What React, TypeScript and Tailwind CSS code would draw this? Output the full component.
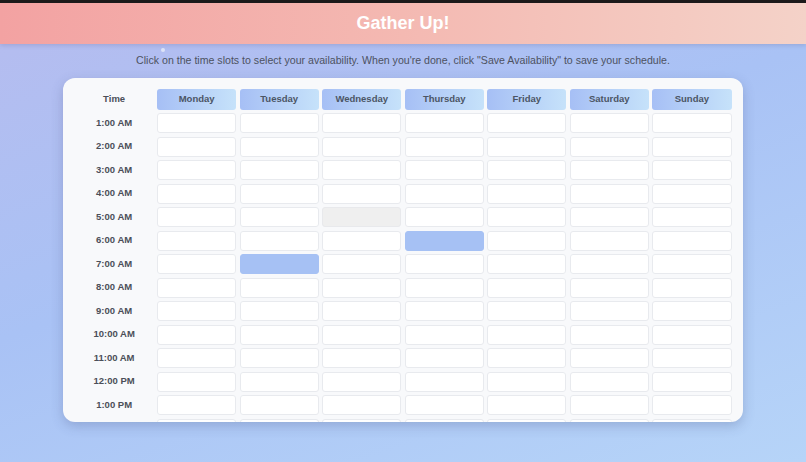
const days = ['Monday', 'Tuesday', 'Wednesday', 'Thursday', 'Friday', 'Saturday', 'Sunday'];

// 1:00 AM through 2:00 PM, the card only shows the first rows anyway
const hours = Array.from({ length: 14 }, (_, i) => {
  const h = i + 1;
  const label = h % 12 === 0 ? 12 : h % 12;
  const suffix = h < 12 ? 'AM' : 'PM';
  return `${label}:00 ${suffix}`;
});

// slot key = `${hourIndex}-${dayIndex}`
const selected = new Set(['5-3', '6-1']);
const hovered = '4-2';

export default function App() {
  return (
    <div
      className="relative flex h-[462px] w-[806px] flex-col overflow-hidden bg-[linear-gradient(160deg,#b6bcef_0%,#a9c2f5_45%,#b6d4f8_100%)]"
      style={{ fontFamily: '"Liberation Sans", Arial, sans-serif' }}
    >
      {/* Top strip */}
      <div className="h-[3px] shrink-0 bg-[#1c1a1a]" />

      {/* Header */}
      <header className="flex h-[41px] shrink-0 items-center justify-center bg-[linear-gradient(90deg,#f3a2a2_0%,#f4b9b2_50%,#f4d2c8_100%)] shadow-[0_2px_4px_rgba(80,80,120,0.18)]">
        <h1 className="text-[18px] font-bold text-white">Gather Up!</h1>
      </header>

      <span className="absolute left-[161px] top-[48px] h-[4px] w-[4px] rounded-full bg-[#dde3f7]" />

      <p className="mt-[10px] text-center text-[10.6px] leading-[13px] text-[#4d5261]">
        Click on the time slots to select your availability. When you're done, click "Save Availability" to save your
        schedule.
      </p>

      {/* Calendar card */}
      <div className="ml-[63px] mt-[11px] h-[344px] w-[680px] overflow-hidden rounded-[12px] bg-[#f8f9fb] px-[11.5px] pt-[11px] shadow-[0_4px_12px_rgba(60,70,120,0.25)]">
        <div className="grid grid-cols-8 gap-x-[3.3px] gap-y-[3.5px]">
          <div className="flex h-[20.5px] items-center justify-center text-[9.5px] font-bold text-[#4b4f58]">Time</div>
          {days.map((d) => (
            <div
              key={d}
              className="flex h-[20.5px] items-center justify-center rounded-[3px] bg-[linear-gradient(90deg,#a6bff5,#c6e2fa)] text-[9.5px] font-bold text-[#4b5565]"
            >
              {d}
            </div>
          ))}

          {hours.map((h, hi) => (
            <div key={h} className="contents">
              <div className="flex h-[20px] items-center justify-center text-[9.5px] font-bold text-[#4b4f58]">{h}</div>
              {days.map((d, di) => {
                const key = `${hi}-${di}`;
                const isSel = selected.has(key);
                const isHover = key === hovered;
                return (
                  <div
                    key={d}
                    className={
                      isSel
                        ? 'h-[20px] rounded-[3px] border border-[#a6c1f4] bg-[#a6c1f4]'
                        : isHover
                          ? 'h-[20px] rounded-[3px] border border-[#e8e9ec] bg-[#efefef]'
                          : 'h-[20px] rounded-[3px] border border-[#e8eaee] bg-white'
                    }
                  />
                );
              })}
            </div>
          ))}
        </div>
      </div>
    </div>
  );
}
